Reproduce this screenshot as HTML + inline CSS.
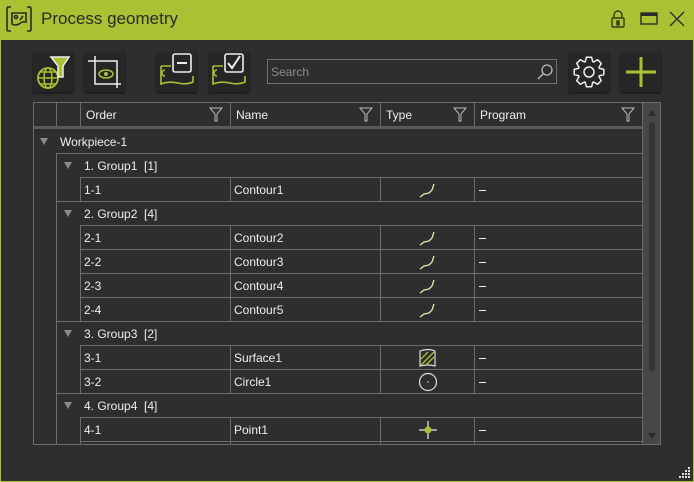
<!DOCTYPE html>
<html><head><style>
*{margin:0;padding:0;box-sizing:border-box}
body{width:694px;height:482px;background:#2e2e2e;font-family:"Liberation Sans",sans-serif;overflow:hidden;position:relative}
.win{position:absolute;left:0;top:0;width:694px;height:482px;border:1px solid #a9c133;background:#2e2e2e}
.title{position:absolute;left:0;top:0;width:694px;height:40px;background:#a9c133}
.title span{position:absolute;left:41px;top:9px;font-size:17px;color:#2b2b2b}
.btn{position:absolute;top:52px;width:40px;height:40px;background:#262626;border-radius:2px;box-shadow:0 1px 2px #111}
.search{position:absolute;left:267px;top:59px;width:290px;height:25px;border:1px solid #707070;background:#2e2e2e}
.search span{position:absolute;left:3px;top:5px;font-size:12px;color:#8a8a8a}
.t{position:absolute;font-size:12px;color:#eee}
.hl{position:absolute;height:1px;background:#6c6c6c}
.vl{position:absolute;width:1px;background:#6c6c6c}
.arr{position:absolute;width:0;height:0;border-left:4px solid transparent;border-right:4px solid transparent;border-top:7px solid #8a8a8a}
.dash{position:absolute;left:479px;width:7px;height:1px;background:#eee}
</style></head><body>
<div class="win"></div>
<div class="title">
<svg style="position:absolute;left:5px;top:5px" width="28" height="28" viewBox="0 0 28 28" fill="none" stroke="#2b2b2b" stroke-width="1.6"><path d="M6 2H3Q2 2 2 4v20q0 2 1 2h3M22 2h3q1 0 1 2v20q0 2-1 2h-3"/><path d="M7 8h14v9q-3-1-7 2-4 2-7 0z"/><circle cx="11" cy="12" r="1.5"/><path d="M15 15l3-4"/></svg>
<span>Process geometry</span>
<svg style="position:absolute;left:610px;top:10px" width="16" height="18" viewBox="0 0 16 18" fill="none" stroke="#3a3a1a" stroke-width="1.4"><path d="M4 8V5a4 4 0 018 0v3"/><rect x="2" y="8" width="12" height="9" rx="1"/><rect x="7" y="11" width="2" height="4" fill="#3a3a1a"/></svg>
<svg style="position:absolute;left:640px;top:12px" width="18" height="13"><rect x="1" y="1" width="16" height="11" fill="none" stroke="#2b2b2b" stroke-width="1.4"/><rect x="1" y="1" width="16" height="3" fill="#2b2b2b"/></svg>
<svg style="position:absolute;left:668px;top:10px" width="18" height="18" stroke="#2b2b2b" stroke-width="1.3"><path d="M2 2l14 14M16 2L2 16"/></svg>
</div>
<div class="btn" style="left:33px"><svg width="40" height="40" viewBox="0 0 40 40" fill="none"><circle cx="15" cy="26" r="10" stroke="#a9c133" stroke-width="1.8"/><ellipse cx="15" cy="26" rx="4" ry="10" stroke="#a9c133" stroke-width="1.5"/><path d="M5 26h20M7 20h16M7 32h16" stroke="#a9c133" stroke-width="1.5"/><path d="M18 5h18l-6 9v11h-5V14z" fill="#a9c133" stroke="#eee" stroke-width="1.5"/></svg></div>
<div class="btn" style="left:85px"><svg width="40" height="40" viewBox="0 0 40 40" fill="none" stroke="#eee" stroke-width="1.5"><path d="M3 9h7M10 4v28h22M10 9h22v27M32 32h4"/><ellipse cx="21" cy="22" rx="7" ry="4" stroke="#a9c133"/><circle cx="21" cy="22" r="2" fill="#a9c133" stroke="none"/></svg></div>
<div class="btn" style="left:157px"><svg width="40" height="40" viewBox="0 0 40 40" fill="none"><path d="M4 14v18q8-3 17-1 8 2 15-1v-6" stroke="#a9c133" stroke-width="1.6"/><path d="M4 14h10M8 24a3 3 0 010-6" stroke="#a9c133" stroke-width="1.5"/><rect x="16" y="2" width="18" height="18" rx="2" fill="#262626" stroke="#eee" stroke-width="1.6"/><path d="M20 11h10" stroke="#eee" stroke-width="2"/></svg></div>
<div class="btn" style="left:209px"><svg width="40" height="40" viewBox="0 0 40 40" fill="none"><path d="M4 14v18q8-3 17-1 8 2 15-1v-6" stroke="#a9c133" stroke-width="1.6"/><path d="M4 14h10M8 24a3 3 0 010-6" stroke="#a9c133" stroke-width="1.5"/><rect x="16" y="2" width="18" height="18" rx="2" fill="#262626" stroke="#eee" stroke-width="1.6"/><path d="M19 11l4 5 8-12" stroke="#eee" stroke-width="2"/></svg></div>
<div class="search"><span>Search</span><svg style="position:absolute;left:268px;top:3px" width="18" height="18" fill="none" stroke="#bbb" stroke-width="1.3"><circle cx="11" cy="7" r="5"/><path d="M7 11l-5 5"/></svg></div>
<div class="btn" style="left:569px"><svg width="40" height="40" viewBox="0 0 40 40" fill="none" stroke="#eee" stroke-width="1.5" stroke-linejoin="round"><polygon points="30.34,16.24 34.77,17.40 34.77,22.60 30.34,23.76 29.97,24.65 32.29,28.60 28.60,32.29 24.65,29.97 23.76,30.34 22.60,34.77 17.40,34.77 16.24,30.34 15.35,29.97 11.40,32.29 7.71,28.60 10.03,24.65 9.66,23.76 5.23,22.60 5.23,17.40 9.66,16.24 10.03,15.35 7.71,11.40 11.40,7.71 15.35,10.03 16.24,9.66 17.40,5.23 22.60,5.23 23.76,9.66 24.65,10.03 28.60,7.71 32.29,11.40 29.97,15.35"/><circle cx="20" cy="20" r="5"/></svg></div>
<div class="btn" style="left:621px"><svg width="40" height="40" stroke="#a9c133" stroke-width="3"><path d="M20 5v30M5 20h30"/></svg></div>

<div style="position:absolute;left:33px;top:102px;width:628px;height:343px;border:1px solid #6c6c6c;background:#2e2e2e"></div>
<div style="position:absolute;left:34px;top:126px;width:609px;height:3px;background:#5a5a5a"></div>
<div class="vl" style="left:56px;top:102px;height:24px"></div>
<div class="vl" style="left:80px;top:102px;height:24px"></div>
<div class="vl" style="left:230px;top:102px;height:24px"></div>
<div class="vl" style="left:380px;top:102px;height:24px"></div>
<div class="vl" style="left:474px;top:102px;height:24px"></div>
<div class="vl" style="left:642px;top:102px;height:343px"></div>
<div class="t" style="left:86px;top:108px">Order</div>
<div class="t" style="left:236px;top:108px">Name</div>
<div class="t" style="left:386px;top:108px">Type</div>
<div class="t" style="left:480px;top:108px">Program</div>
<svg style="position:absolute;left:209px;top:107px" width="14" height="15" fill="none" stroke="#bbb"><path d="M1 1h12l-5 6v7H6V7z"/></svg>
<svg style="position:absolute;left:359px;top:107px" width="14" height="15" fill="none" stroke="#bbb"><path d="M1 1h12l-5 6v7H6V7z"/></svg>
<svg style="position:absolute;left:453px;top:107px" width="14" height="15" fill="none" stroke="#bbb"><path d="M1 1h12l-5 6v7H6V7z"/></svg>
<svg style="position:absolute;left:621px;top:107px" width="14" height="15" fill="none" stroke="#bbb"><path d="M1 1h12l-5 6v7H6V7z"/></svg>
<div style="position:absolute;left:643px;top:103px;width:17px;height:341px;background:#474747"></div>
<div style="position:absolute;left:649px;top:122px;width:6px;height:249px;background:#333;border-radius:3px"></div>
<div style="position:absolute;left:648px;top:110px;width:0;height:0;border-left:4px solid transparent;border-right:4px solid transparent;border-bottom:6px solid #2a2a2a"></div>
<div style="position:absolute;left:648px;top:433px;width:0;height:0;border-left:4px solid transparent;border-right:4px solid transparent;border-top:6px solid #2a2a2a"></div>

<div class="arr" style="left:40px;top:138px"></div><div class="t" style="left:60px;top:135px">Workpiece-1</div>
<div class="vl" style="left:56px;top:153px;height:291px"></div>

<div class="hl" style="left:56px;top:153px;width:586px"></div>
<div class="arr" style="left:64px;top:162px"></div><div class="t" style="left:84px;top:159px">1. Group1&nbsp; [1]</div>
<div class="hl" style="left:80px;top:177px;width:562px"></div>

<div class="hl" style="left:56px;top:201px;width:586px"></div>
<div class="arr" style="left:64px;top:210px"></div><div class="t" style="left:84px;top:207px">2. Group2&nbsp; [4]</div>
<div class="hl" style="left:80px;top:225px;width:562px"></div>
<div class="hl" style="left:80px;top:249px;width:562px"></div>
<div class="hl" style="left:80px;top:273px;width:562px"></div>
<div class="hl" style="left:80px;top:297px;width:562px"></div>
<div class="hl" style="left:56px;top:321px;width:586px"></div>
<div class="arr" style="left:64px;top:330px"></div><div class="t" style="left:84px;top:327px">3. Group3&nbsp; [2]</div>
<div class="hl" style="left:80px;top:345px;width:562px"></div>
<div class="hl" style="left:80px;top:369px;width:562px"></div>
<div class="hl" style="left:56px;top:393px;width:586px"></div>
<div class="arr" style="left:64px;top:402px"></div><div class="t" style="left:84px;top:399px">4. Group4&nbsp; [4]</div>
<div class="hl" style="left:80px;top:417px;width:562px"></div>
<div class="hl" style="left:80px;top:441px;width:562px"></div>

<div class="vl" style="left:80px;top:177px;height:24px"></div><div class="vl" style="left:230px;top:177px;height:24px"></div><div class="vl" style="left:380px;top:177px;height:24px"></div><div class="vl" style="left:474px;top:177px;height:24px"></div>
<div class="vl" style="left:80px;top:225px;height:96px"></div><div class="vl" style="left:230px;top:225px;height:96px"></div><div class="vl" style="left:380px;top:225px;height:96px"></div><div class="vl" style="left:474px;top:225px;height:96px"></div>
<div class="vl" style="left:80px;top:345px;height:48px"></div><div class="vl" style="left:230px;top:345px;height:48px"></div><div class="vl" style="left:380px;top:345px;height:48px"></div><div class="vl" style="left:474px;top:345px;height:48px"></div>
<div class="vl" style="left:80px;top:417px;height:27px"></div><div class="vl" style="left:230px;top:417px;height:27px"></div><div class="vl" style="left:380px;top:417px;height:27px"></div><div class="vl" style="left:474px;top:417px;height:27px"></div>

<div class="t" style="left:84px;top:183px">1-1</div><div class="t" style="left:234px;top:183px">Contour1</div>
<div class="t" style="left:84px;top:231px">2-1</div><div class="t" style="left:234px;top:231px">Contour2</div>
<div class="t" style="left:84px;top:255px">2-2</div><div class="t" style="left:234px;top:255px">Contour3</div>
<div class="t" style="left:84px;top:279px">2-3</div><div class="t" style="left:234px;top:279px">Contour4</div>
<div class="t" style="left:84px;top:303px">2-4</div><div class="t" style="left:234px;top:303px">Contour5</div>
<div class="t" style="left:84px;top:351px">3-1</div><div class="t" style="left:234px;top:351px">Surface1</div>
<div class="t" style="left:84px;top:375px">3-2</div><div class="t" style="left:234px;top:375px">Circle1</div>
<div class="t" style="left:84px;top:423px">4-1</div><div class="t" style="left:234px;top:423px">Point1</div>

<svg style="position:absolute;left:418px;top:181px" width="20" height="18" fill="none" stroke="#dfe8b0" stroke-width="1.3"><path d="M2 16l4-3 5-1 3-3 2-6"/></svg>
<svg style="position:absolute;left:418px;top:229px" width="20" height="18" fill="none" stroke="#dfe8b0" stroke-width="1.3"><path d="M2 16l4-3 5-1 3-3 2-6"/></svg>
<svg style="position:absolute;left:418px;top:253px" width="20" height="18" fill="none" stroke="#dfe8b0" stroke-width="1.3"><path d="M2 16l4-3 5-1 3-3 2-6"/></svg>
<svg style="position:absolute;left:418px;top:277px" width="20" height="18" fill="none" stroke="#dfe8b0" stroke-width="1.3"><path d="M2 16l4-3 5-1 3-3 2-6"/></svg>
<svg style="position:absolute;left:418px;top:301px" width="20" height="18" fill="none" stroke="#dfe8b0" stroke-width="1.3"><path d="M2 16l4-3 5-1 3-3 2-6"/></svg>
<svg style="position:absolute;left:417px;top:347px" width="22" height="22" fill="none"><path d="M3 4q8-3 15 0v15q-7-2-15 0z" stroke="#ddd" stroke-width="1.2"/><path d="M4 12l7-7M4 18l13-13M9 18l8-8" stroke="#a9c133" stroke-width="1.3"/></svg>
<svg style="position:absolute;left:418px;top:372px" width="20" height="20" fill="none"><circle cx="10" cy="10" r="8.5" stroke="#ddd" stroke-width="1.2"/><circle cx="10" cy="10" r=".8" fill="#ddd"/></svg>
<svg style="position:absolute;left:418px;top:420px" width="20" height="20"><path d="M10 1v18M1 10h18" stroke="#eee" stroke-width="1.2"/><circle cx="10" cy="10" r="3.5" fill="#a9c133"/></svg>

<div class="dash" style="top:190px"></div><div class="dash" style="top:238px"></div><div class="dash" style="top:262px"></div><div class="dash" style="top:286px"></div><div class="dash" style="top:310px"></div><div class="dash" style="top:358px"></div><div class="dash" style="top:382px"></div><div class="dash" style="top:430px"></div>

<svg style="position:absolute;left:679px;top:467px" width="12" height="12" fill="#ddd"><rect x="9" y="0" width="2" height="2"/><rect x="6" y="3" width="2" height="2"/><rect x="9" y="3" width="2" height="2"/><rect x="3" y="6" width="2" height="2"/><rect x="6" y="6" width="2" height="2"/><rect x="9" y="6" width="2" height="2"/><rect x="0" y="9" width="2" height="2"/><rect x="3" y="9" width="2" height="2"/><rect x="6" y="9" width="2" height="2"/><rect x="9" y="9" width="2" height="2"/></svg>
</body></html>
